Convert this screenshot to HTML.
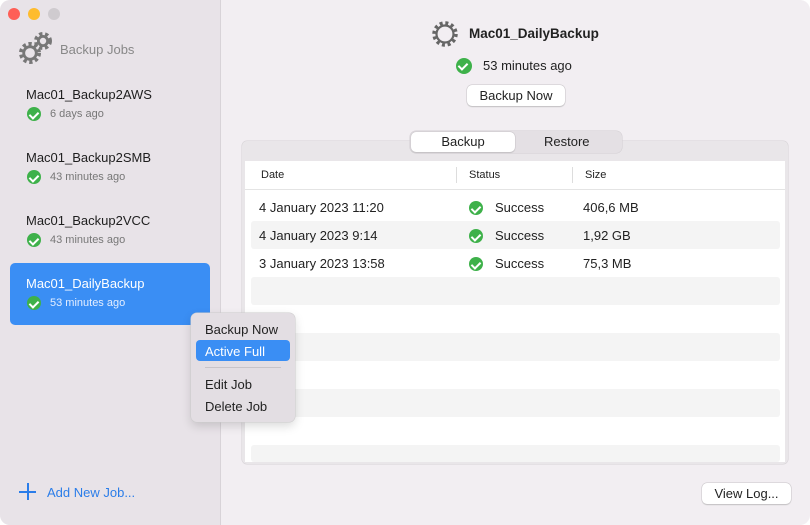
<!DOCTYPE html>
<html><head><meta charset="utf-8"><style>
*{margin:0;padding:0;box-sizing:border-box}
body{width:810px;height:525px;overflow:hidden;background:#fff;font-family:"Liberation Sans",sans-serif;font-size:13px;color:#222}
.win{position:absolute;left:0;top:0;width:810px;height:525px;border-radius:10px;overflow:hidden;background:#f2eef2}
.side{position:absolute;left:0;top:0;width:221px;height:525px;background:#e8e3e8;border-right:1px solid #d8d3d8}
.dot{position:absolute;top:8px;width:12px;height:12px;border-radius:50%}
.abs{position:absolute;white-space:nowrap}
.chk{position:absolute;width:14px;height:14px;border-radius:50%;background:#3eb14a}
.chk:after{content:"";position:absolute;left:4px;top:2.5px;width:4px;height:7px;border:solid #fff;border-width:0 2px 2px 0;transform:rotate(45deg)}
.job{font-size:13px;color:#1e1e1e}
.ago{font-size:11px;color:#777}
.btn{position:absolute;background:#fff;border-radius:5px;box-shadow:0 0 0 .5px #c8c4c8,0 1px 1px #bbb;font-size:13px;text-align:center}
.stripe{position:absolute;left:251px;width:529px;height:28px;background:#f4f4f4;border-radius:3px}
</style></head><body><div class="win">
<div class="side">
<div class="dot" style="left:8px;background:#fe5f57"></div>
<div class="dot" style="left:28px;background:#febc2e"></div>
<div class="dot" style="left:48px;background:#cfcbcf"></div>
<svg class="abs" style="left:18px;top:30px" width="36" height="36" viewBox="0 0 36 36">
<g fill="none" stroke="#777" stroke-width="4" stroke-dasharray="3.2 2.6"><circle cx="12" cy="23" r="9"/><circle cx="25" cy="11" r="7"/></g>
<g fill="none" stroke="#777" stroke-width="2.8"><circle cx="12" cy="23" r="6.3"/><circle cx="25" cy="11" r="4.6"/></g>
</svg>
<div class="abs" style="left:60px;top:42px;color:#888;font-size:13px">Backup Jobs</div>
<div class="abs job" style="left:26px;top:87px">Mac01_Backup2AWS</div><div class="chk" style="left:27px;top:107px"></div><div class="abs ago" style="left:50px;top:108px">6 days ago</div>
<div class="abs job" style="left:26px;top:150px">Mac01_Backup2SMB</div><div class="chk" style="left:27px;top:170px"></div><div class="abs ago" style="left:50px;top:171px">43 minutes ago</div>
<div class="abs job" style="left:26px;top:213px">Mac01_Backup2VCC</div><div class="chk" style="left:27px;top:233px"></div><div class="abs ago" style="left:50px;top:234px">43 minutes ago</div>
<div class="abs" style="left:10px;top:263px;width:200px;height:62px;background:#3a8ef4;border-radius:5px"></div>
<div class="abs job" style="left:26px;top:276px;color:#fff">Mac01_DailyBackup</div><div class="chk" style="left:27px;top:296px"></div><div class="abs ago" style="left:50px;top:297px;color:#e4eeff">53 minutes ago</div>
<div class="abs" style="left:19px;top:491px;width:17px;height:1.5px;background:#2b7de9"></div>
<div class="abs" style="left:27px;top:483px;width:1.5px;height:17px;background:#2b7de9"></div>
<div class="abs" style="left:47px;top:485px;color:#2b7de9;font-size:13px">Add New Job...</div>
</div>
<svg class="abs" style="left:430px;top:19px" width="30" height="30" viewBox="0 0 30 30"><circle cx="15" cy="15" r="11" fill="none" stroke="#666" stroke-width="3.5" stroke-dasharray="3 2.76"/><circle cx="15" cy="15" r="8.5" fill="none" stroke="#666" stroke-width="2.2"/></svg>
<div class="abs" style="left:469px;top:26px;font-weight:bold;font-size:13.5px">Mac01_DailyBackup</div>
<div class="chk" style="left:456px;top:58px;width:16px;height:16px"></div>
<div class="abs" style="left:483px;top:58px">53 minutes ago</div>
<div class="btn" style="left:467px;top:85px;width:98px;height:21px;line-height:21px">Backup Now</div>
<div class="abs" style="left:242px;top:141px;width:546px;height:323px;background:#e9e6e9;border-radius:5px;box-shadow:0 0 0 .5px #d6d2d6"></div>
<div class="abs" style="left:245px;top:161px;width:540px;height:301px;background:#fff"></div>
<div class="abs" style="left:410px;top:131px;width:212px;height:22px;background:#e4e0e4;border-radius:6px;box-shadow:0 0 0 .5px #d2ced2"></div>
<div class="btn" style="left:411px;top:132px;width:104px;height:20px;line-height:20px">Backup</div>
<div class="abs" style="left:544px;top:134px">Restore</div>
<div class="abs" style="left:245px;top:189px;width:540px;height:1px;background:#e4e4e4"></div>
<div class="abs" style="left:456px;top:167px;width:1px;height:16px;background:#ddd"></div>
<div class="abs" style="left:572px;top:167px;width:1px;height:16px;background:#ddd"></div>
<div class="abs" style="left:261px;top:169px;font-size:11px">Date</div>
<div class="abs" style="left:469px;top:169px;font-size:11px">Status</div>
<div class="abs" style="left:585px;top:169px;font-size:11px">Size</div>
<div class="stripe" style="top:221px"></div><div class="stripe" style="top:277px"></div><div class="stripe" style="top:333px"></div><div class="stripe" style="top:389px"></div><div class="stripe" style="top:445px;height:17px"></div>
<div class="abs" style="left:259px;top:200px">4 January 2023 11:20</div><div class="chk" style="left:469px;top:201px"></div><div class="abs" style="left:495px;top:200px">Success</div><div class="abs" style="left:583px;top:200px">406,6 MB</div>
<div class="abs" style="left:259px;top:228px">4 January 2023 9:14</div><div class="chk" style="left:469px;top:229px"></div><div class="abs" style="left:495px;top:228px">Success</div><div class="abs" style="left:583px;top:228px">1,92 GB</div>
<div class="abs" style="left:259px;top:256px">3 January 2023 13:58</div><div class="chk" style="left:469px;top:257px"></div><div class="abs" style="left:495px;top:256px">Success</div><div class="abs" style="left:583px;top:256px">75,3 MB</div>
<div class="btn" style="left:702px;top:483px;width:89px;height:21px;line-height:21px">View Log...</div>
<div class="abs" style="left:191px;top:313px;width:104px;height:109px;background:#e3dee3;border-radius:6px;box-shadow:0 0 0 .5px #ccc,0 4px 10px rgba(0,0,0,.15)"></div>
<div class="abs" style="left:205px;top:322px">Backup Now</div>
<div class="abs" style="left:196px;top:340px;width:94px;height:21px;background:#3a8ef4;border-radius:4px"></div>
<div class="abs" style="left:205px;top:344px;color:#fff">Active Full</div>
<div class="abs" style="left:205px;top:367px;width:76px;height:1px;background:#c8c4c8"></div>
<div class="abs" style="left:205px;top:377px">Edit Job</div>
<div class="abs" style="left:205px;top:399px">Delete Job</div>
</div></body></html>
